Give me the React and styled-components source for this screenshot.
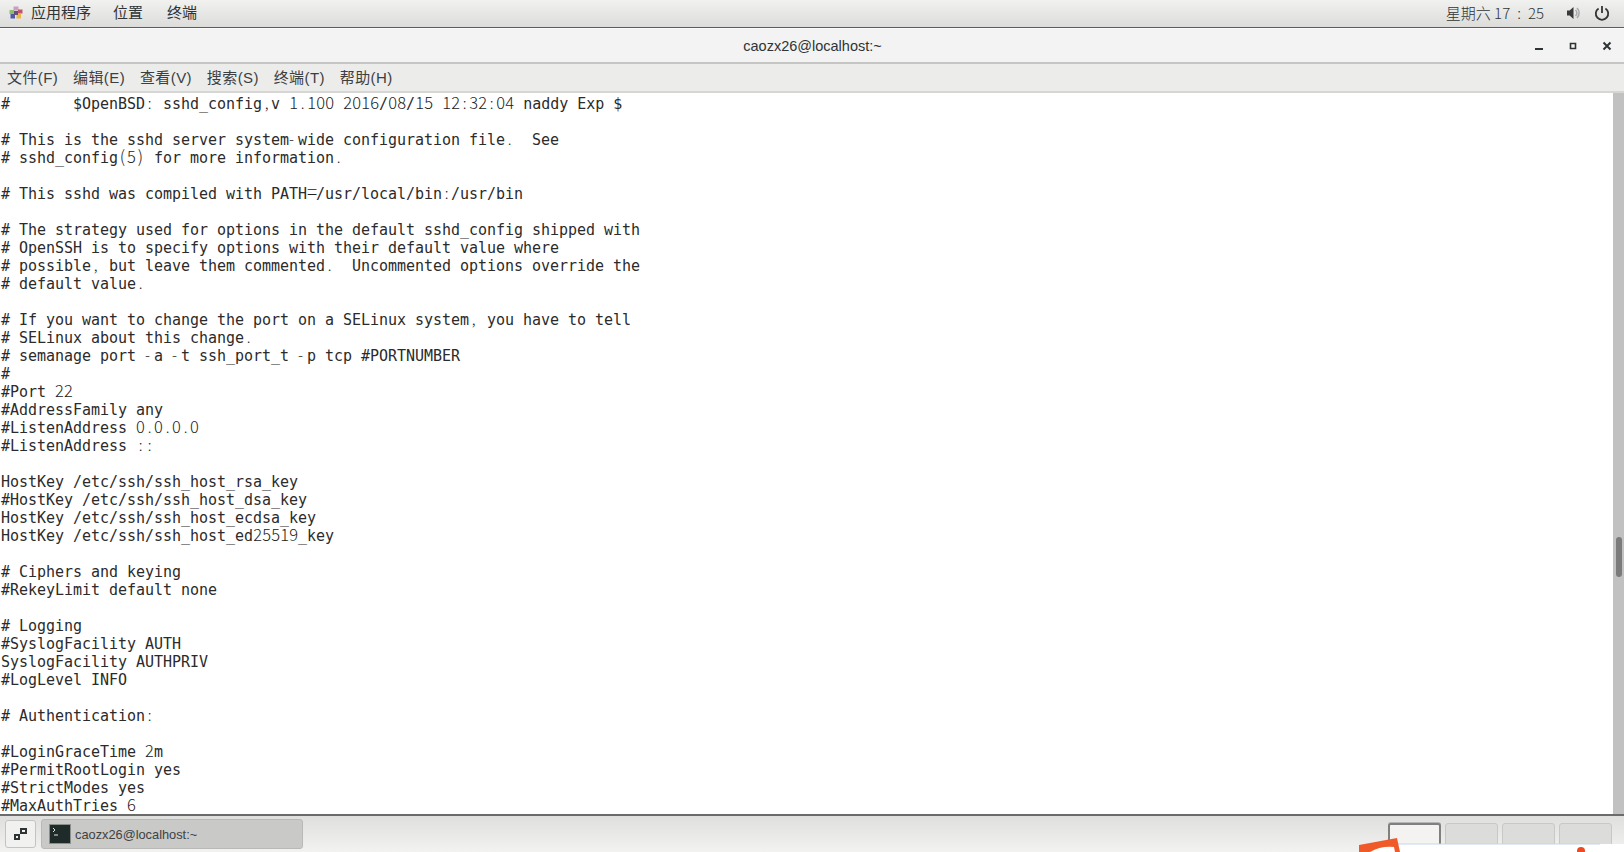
import React from "react";
import styled, { createGlobalStyle } from "styled-components";

const Global = createGlobalStyle`
  html, body { margin: 0; padding: 0; height: 852px; overflow: hidden; background: #fff; }
  #root { height: 852px; }
`;
const uiFont = `"Liberation Sans", "Noto Sans CJK SC", sans-serif`;
const Page = styled.div`
  width: 1624px; height: 852px; display: flex; flex-direction: column; position: relative; overflow: hidden;
  font-family: ${uiFont}; color: #2e3436;
`;
const TopBar = styled.header`
  flex: none; display: flex; align-items: center; justify-content: space-between;
  background: linear-gradient(#f1f1f0, #dcdcda); border-bottom: 1px solid #5c5c5c;
  font-size: 15px; padding: 0 12px 2px 9px; box-sizing: border-box; height: 28px;
`;
const TopLeft = styled.div`display: flex; align-items: center;`;
const TopItem = styled.span`margin-left: ${p => p.$gap}px; line-height: 24px;`;
const TopRight = styled.div`display: flex; align-items: center;`;
const Clock = styled.span`margin-right: 22px; font-size: 15px; font-family: "Noto Sans CJK SC", sans-serif; font-weight: 300;`;
const ClockColon = styled.span`margin: 0 7px;`;
const TitleBar = styled.div`
  height: 33px; flex: none; position: relative; display: flex; align-items: center; justify-content: center;
  background: #f3f3f3; border-top: 1px solid #fbfbfb; border-bottom: 2px solid #c5c5c3;
`;
const Title = styled.h1`margin: 0; font-size: 14.5px; font-weight: 400; color: #2e3436; padding-left: 1px;`;
const WinButtons = styled.div`position: absolute; right: 0; top: 0; height: 100%; display: flex;`;
const WinBtn = styled.div`width: 34px; display: flex; align-items: center; justify-content: center;`;
const MenuBar = styled.nav`
  height: 27px; flex: none; display: flex; align-items: center; gap: 14.9px; padding-left: 7px;
  background: #ececeb; border-bottom: 2px solid #d6d6d4; font-size: 15px; letter-spacing: 0.4px; color: #3b3f41;
`;
const MenuItem = styled.span`line-height: 27px;`;
const Body = styled.main`flex: 1; min-height: 0; display: flex; background: #fff; overflow: hidden;`;
const Code = styled.pre`
  flex: 1; margin: 0; padding: 2px 0 0 1px; font-family: "DejaVu Sans Mono", monospace;
  font-size: 15px; line-height: 18px; letter-spacing: -0.03px; color: #2b2b2b; overflow: hidden;
`;
const Glyph = styled.span`
  display: inline-block; width: 9px; text-align: ${p => (p.$left ? "left" : "center")};
  font-family: "Noto Sans CJK SC", sans-serif; font-size: ${p => p.$size}px;
  font-weight: 300; color: #222; line-height: 10px; height: 10px; white-space: nowrap;
`;
const Track = styled.div`width: 11px; flex: none; background: #c1c1c1; position: relative;`;
const Thumb = styled.div`
  position: absolute; left: 3px; top: 444px; width: 6px; height: 40px; background: #7b7b7b; border-radius: 3px;
`;
const TaskBar = styled.footer`
  flex: none; display: flex; align-items: center; border-top: 2px solid #6b6b6b;
  background: linear-gradient(#dfdfdd, #f2f2f0); padding: 0 0 0 5px; height: 36px;
`;
const ShowDesktop = styled.div`
  width: 29px; height: 26px; border: 1px solid #c3c3c1; border-radius: 3px; background: #f1f1ef;
  display: flex; align-items: center; justify-content: center; flex: none;
`;
const TaskButton = styled.div`
  width: 262px; height: 30px; box-sizing: border-box; margin-left: 5px; border: 1px solid #b9b9b7; border-radius: 3px; background: #c9c9c7;
  display: flex; align-items: center; padding-left: 7px; gap: 4px; font-size: 12.8px; color: #3d4244; flex: none;
`;
const Workspaces = styled.div`
  margin-left: auto; margin-right: 12px; display: flex; align-self: flex-start; margin-top: 7px; gap: 4px;
`;
const Workspace = styled.div`
  width: 53px; height: 30px; box-sizing: border-box; border: 1px solid #c8c8c6; border-radius: 3px 3px 0 0; background: #dcdcdb;
  ${p => p.$active && `background:#f4f3f1; border:2px solid #808080; border-bottom:none; box-shadow:0 -1px 0 #b5b5b5;`}
`;
const Overlay = styled.div`position: absolute; left: 0; top: 0; pointer-events: none;`;

const code = `#	$OpenBSD: sshd_config,v 1.100 2016/08/15 12:32:04 naddy Exp $

# This is the sshd server system-wide configuration file.  See
# sshd_config(5) for more information.

# This sshd was compiled with PATH=/usr/local/bin:/usr/bin

# The strategy used for options in the default sshd_config shipped with
# OpenSSH is to specify options with their default value where
# possible, but leave them commented.  Uncommented options override the
# default value.

# If you want to change the port on a SELinux system, you have to tell
# SELinux about this change.
# semanage port -a -t ssh_port_t -p tcp #PORTNUMBER
#
#Port 22
#AddressFamily any
#ListenAddress 0.0.0.0
#ListenAddress ::

HostKey /etc/ssh/ssh_host_rsa_key
#HostKey /etc/ssh/ssh_host_dsa_key
HostKey /etc/ssh/ssh_host_ecdsa_key
HostKey /etc/ssh/ssh_host_ed25519_key

# Ciphers and keying
#RekeyLimit default none

# Logging
#SyslogFacility AUTH
SyslogFacility AUTHPRIV
#LogLevel INFO

# Authentication:

#LoginGraceTime 2m
#PermitRootLogin yes
#StrictModes yes
#MaxAuthTries 6`;

const glyphSize = (c) => (/\d/.test(c) ? 16.5 : c === "=" ? 19 : /[()]/.test(c) ? 17 : 15);

const renderCode = (s) =>
  s.split(/([\d,.\-=():])/).map((part, i) =>
    i % 2 === 1 ? <Glyph key={i} $size={glyphSize(part)} $left={part === "-"}>{part}</Glyph> : part
  );

const menus = ["文件(F)", "编辑(E)", "查看(V)", "搜索(S)", "终端(T)", "帮助(H)"];

export default function App() {
  return (
    <Page>
      <Global />
      <TopBar>
        <TopLeft>
          <svg width="14" height="14" viewBox="0 0 14 14">
            <rect x="4.5" y="0.5" width="5" height="4" fill="#c9a0c4" />
            <rect x="0.5" y="4" width="4.5" height="4" fill="#8bbf6a" />
            <rect x="9" y="3.5" width="4.5" height="4" fill="#c2546f" />
            <rect x="1.5" y="8" width="4.5" height="4.5" fill="#4f5aa8" />
            <rect x="7.5" y="8" width="4.5" height="4.5" fill="#e8b84a" />
            <rect x="5" y="5" width="4" height="4" fill="#6a4f7a" />
          </svg>
          <TopItem $gap={8}>应用程序</TopItem>
          <TopItem $gap={22}>位置</TopItem>
          <TopItem $gap={24}>终端</TopItem>
        </TopLeft>
        <TopRight>
          <Clock>星期六 17<ClockColon>:</ClockColon>25</Clock>
          <svg width="16" height="16" viewBox="0 0 16 16" style={{ marginRight: 12 }}>
            <path d="M1 5.5h2.6L7.5 2v12L3.6 10.500H1z" fill="#3a3a3a" />
            <path d="M9.500 5a4 4 0 0 1 0 6M11 3a7 7 0 0 1 0 10" fill="none" stroke="#a9a9a9" strokeWidth="1.500" />
          </svg>
          <svg width="16" height="16" viewBox="0 0 16 16" style={{ marginRight: 2 }}>
            <path d="M8 1v7" stroke="#333" strokeWidth="1.800" />
            <path d="M4.600 3.400a6.200 6.200 0 1 0 6.800 0" fill="none" stroke="#333" strokeWidth="1.800" />
          </svg>
        </TopRight>
      </TopBar>
      <TitleBar>
        <Title>caozx26@localhost:~</Title>
        <WinButtons>
          <WinBtn>
            <svg width="10" height="10" viewBox="0 0 10 10"><rect x="1" y="7" width="8" height="2" fill="#2e3436" /></svg>
          </WinBtn>
          <WinBtn>
            <svg width="8" height="8" viewBox="0 0 8 8"><path d="M1.500 1.500h5v5h-5z" fill="none" stroke="#2e3436" strokeWidth="1.600" /></svg>
          </WinBtn>
          <WinBtn>
            <svg width="10" height="10" viewBox="0 0 10 10"><path d="M1.500 1.500l7 7M8.500 1.500l-7 7" stroke="#2e3436" strokeWidth="2" /></svg>
          </WinBtn>
        </WinButtons>
      </TitleBar>
      <MenuBar>
        {menus.map((m) => <MenuItem key={m}>{m}</MenuItem>)}
      </MenuBar>
      <Body>
        <Code>{renderCode(code)}</Code>
        <Track><Thumb /></Track>
      </Body>
      <TaskBar>
        <ShowDesktop>
          <svg width="16" height="16" viewBox="0 0 16 16">
            <path d="M1 8h6v6H1z M3 10v2h2v-2z" fill="#2e3436" fillRule="evenodd" />
            <path d="M7 2h7v6H7z M9 4v2h3V4z" fill="#2e3436" fillRule="evenodd" />
          </svg>
        </ShowDesktop>
        <TaskButton>
          <svg width="22" height="20" viewBox="0 0 22 20">
            <rect x="0.500" y="0.500" width="21" height="19" fill="#1f2b28" stroke="#8a8f8c" />
            <path d="M4 4l2 2-2 2M5 11h4" stroke="#dfe5e2" fill="none" />
          </svg>
          caozx26@localhost:~
        </TaskButton>
        <Workspaces>
          <Workspace $active />
          <Workspace />
          <Workspace />
          <Workspace />
        </Workspaces>
      </TaskBar>
      <Overlay>
        <svg width="1624" height="852" viewBox="0 0 1624 852">
          <rect x="1398" y="844" width="226" height="8" fill="#ffffff" />
          <path d="M1398 844H1600" stroke="#c5d5e8" strokeWidth="1" fill="none" />
          <path d="M1359 845l38-7 3 14h-41z" fill="#f05a28" />
          <path d="M1370 852q10-6 24-5l1 5z" fill="#ffffff" />
          <circle cx="1581" cy="851" r="4" fill="#f04a24" />
        </svg>
      </Overlay>
    </Page>
  );
}
